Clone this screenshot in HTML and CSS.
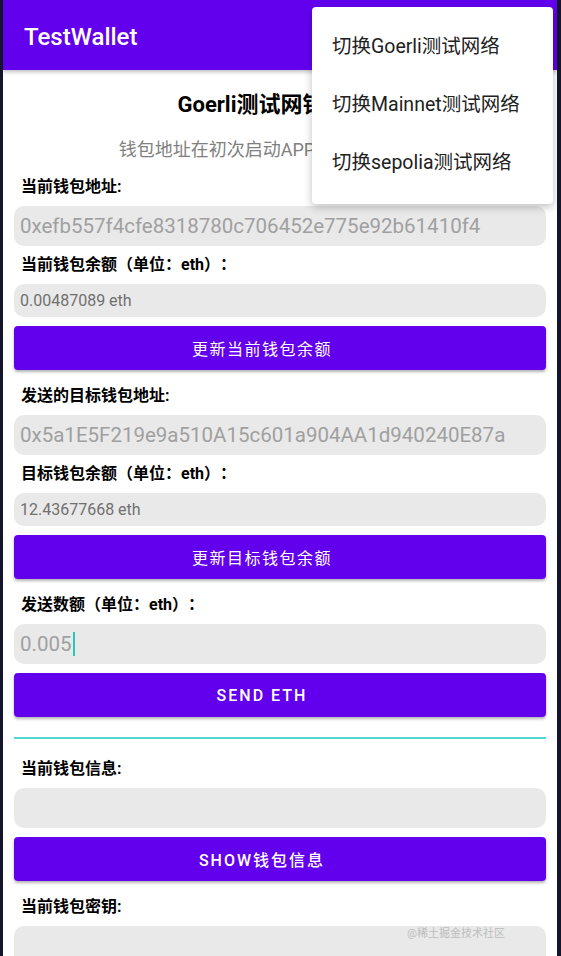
FILE: index.html
```html
<!DOCTYPE html>
<html lang="zh">
<head>
    <meta charset="UTF-8">
    <meta name="viewport" content="width=device-width, initial-scale=1.0">
    <title>TestWallet</title>
    <link rel="stylesheet" href="styles.css">
</head>
<body>

    <div class="screen">
        <header class="appbar">TestWallet</header>

        <div class="content">
            <h2 class="title">Goerli测试网钱包</h2>
            <p class="subtitle">钱包地址在初次启动APP时随机生成</p>

            <div class="label">当前钱包地址:</div>
            <div class="box big">0xefb557f4cfe8318780c706452e775e92b61410f4</div>

            <div class="label">当前钱包余额（单位：eth）：</div>
            <div class="box small">0.00487089 eth</div>

            <button class="btn">更新当前钱包余额</button>

            <div class="label">发送的目标钱包地址:</div>
            <div class="box big">0x5a1E5F219e9a510A15c601a904AA1d940240E87a</div>

            <div class="label">目标钱包余额（单位：eth）：</div>
            <div class="box small">12.43677668 eth</div>

            <button class="btn">更新目标钱包余额</button>

            <div class="label">发送数额（单位：eth）：</div>
            <div class="box big"><span class="cursor">0.005</span></div>

            <button class="btn caps">SEND ETH</button>

            <hr class="divider">

            <div class="label">当前钱包信息:</div>
            <div class="box big"></div>

            <button class="btn caps">SHOW钱包信息</button>

            <div class="label">当前钱包密钥:</div>
            <div class="box big"></div>
        </div>

        <!-- 右上角菜单 -->
        <div class="menu">
            <div class="menu-item">切换Goerli测试网络</div>
            <div class="menu-item">切换Mainnet测试网络</div>
            <div class="menu-item">切换sepolia测试网络</div>
        </div>

        <div class="watermark">@稀土掘金技术社区</div>
    </div>

</body>
</html>
```

FILE: styles.css
```css
body {
    margin: 0;
    padding: 0;
    background-color: #14142a;
    font-family: Roboto, "Noto Sans CJK SC", sans-serif;
}
.screen {
    position: relative;
    margin: 0 4px 0 3px;
    height: 956px;
    overflow: hidden;
    background-color: #ffffff;
}
.appbar {
    height: 70px;
    display: flex;
    align-items: center;
    padding: 3px 0 0 21px;
    box-sizing: border-box;
    background-color: #6200ee;
    color: white;
    font-size: 24px;
    font-weight: 500;
    box-shadow: 0 2px 4px rgba(0, 0, 0, 0.25);
}
.content {
    padding: 0 11px;
    display: flex;
    flex-direction: column;
}
.title {
    margin: 20px 0 0;
    padding-right: 36px;
    text-align: center;
    font-size: 22px;
    line-height: 30px;
    font-weight: bold;
    color: #000;
}
.subtitle {
    margin: 18px 0 0;
    padding-right: 36px;
    text-align: center;
    font-size: 18px;
    line-height: 24px;
    color: #808080;
}
.label {
    margin-top: 8px;
    padding-left: 7px;
    font-size: 16px;
    line-height: 22px;
    font-weight: bold;
    color: #000;
    text-spacing-trim: space-all;
}
.subtitle + .label {
    margin-top: 14px;
}
.btn + .label {
    margin-top: 15px;
}
.box {
    margin-top: 8px;
    padding-left: 6px;
    border-radius: 10px;
    background-color: #e9e9e9;
    white-space: nowrap;
    overflow: hidden;
}
.big {
    height: 40px;
    line-height: 40px;
    font-size: 20.5px;
    color: #a0a0a0;
}
.small {
    height: 33px;
    line-height: 33px;
    font-size: 16px;
    color: #707070;
}
.cursor {
    padding-right: 1px;
    border-right: 2px solid #2cc7b8;
}
.btn {
    margin-top: 9px;
    height: 44px;
    padding: 0 36px 0 0;
    border: none;
    border-radius: 4px;
    background-color: #6200ee;
    color: white;
    font-family: Roboto, "Noto Sans CJK SC", sans-serif;
    font-size: 16px;
    letter-spacing: 1.5px;
    box-shadow: 0 2px 3px rgba(0, 0, 0, 0.3);
    cursor: pointer;
}
.caps {
    font-weight: 500;
    letter-spacing: 2px;
}
.divider {
    margin: 20px 0 0;
    border: none;
    height: 2px;
    background-color: #4fd8cb;
}
.divider + .label {
    margin-top: 19px;
}
.menu {
    position: absolute;
    top: 7px;
    left: 309px;
    width: 241px;
    padding: 11px 0 12px;
    border-radius: 4px;
    background-color: white;
    box-shadow: 0 3px 8px rgba(0, 0, 0, 0.25);
}
.menu-item {
    height: 58px;
    line-height: 58px;
    padding-left: 20px;
    font-size: 19.5px;
    color: #212121;
}
.watermark {
    position: absolute;
    right: 52px;
    top: 924px;
    font-size: 11px;
    color: #bdbdbd;
}
```
